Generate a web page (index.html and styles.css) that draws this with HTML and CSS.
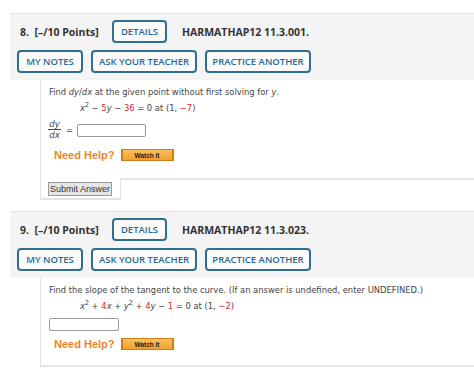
FILE: index.html
```html
<!DOCTYPE html>
<html lang="en">
<head>
  <meta charset="UTF-8">
  <title>Questions</title>
  <link rel="stylesheet" href="styles.css">
</head>
<body>

  <div class="question">
    <div class="q-head">
      <div class="q-row">
        <span class="q-num">8.&nbsp; [–/10 Points]</span>
        <button class="btn btn-details">DETAILS</button>
        <span class="q-code">HARMATHAP12 11.3.001.</span>
      </div>
      <div class="q-row">
        <button class="btn btn-notes">MY NOTES</button>
        <button class="btn btn-ask">ASK YOUR TEACHER</button>
        <button class="btn btn-practice">PRACTICE ANOTHER</button>
      </div>
    </div>
    <div class="q-body">
      <p class="prompt">Find <i>dy</i>/<i>dx</i> at the given point without first solving for <i>y</i>.</p>
      <p class="eq"><i>x</i><sup>2</sup> − <span class="red">5</span><i>y</i> − <span class="red">36</span> = 0 at (1, <span class="red">−7</span>)</p>
      <div class="answer-row">
        <span class="frac"><span class="top"><i>dy</i></span><span class="bot"><i>dx</i></span></span>
        <span class="eqsign">=</span>
        <input type="text" class="answer">
      </div>
      <div class="help">
        <span class="help-label">Need Help?</span>
        <button class="watch">Watch It</button>
      </div>
    </div>
    <div class="q-foot">
      <div class="submit-tab"><button class="submit">Submit Answer</button></div>
      <div class="foot-fill"></div>
    </div>
  </div>

  <div class="question">
    <div class="q-head">
      <div class="q-row">
        <span class="q-num">9.&nbsp; [–/10 Points]</span>
        <button class="btn btn-details">DETAILS</button>
        <span class="q-code">HARMATHAP12 11.3.023.</span>
      </div>
      <div class="q-row">
        <button class="btn btn-notes">MY NOTES</button>
        <button class="btn btn-ask">ASK YOUR TEACHER</button>
        <button class="btn btn-practice">PRACTICE ANOTHER</button>
      </div>
    </div>
    <div class="q-body last">
      <p class="prompt">Find the slope of the tangent to the curve. (If an answer is undefined, enter UNDEFINED.)</p>
      <p class="eq"><i>x</i><sup>2</sup> + <span class="red">4</span><i>x</i> + <i>y</i><sup>2</sup> + <span class="red">4</span><i>y</i> − <span class="red">1</span> = 0 at (1, <span class="red">−2</span>)</p>
      <div class="answer-row plain">
        <input type="text" class="answer wide">
      </div>
      <div class="help tight">
        <span class="help-label">Need Help?</span>
        <button class="watch">Watch It</button>
      </div>
    </div>
  </div>

</body>
</html>
```

FILE: styles.css
```css
body {
  margin: 0;
  padding: 13px 0 0 10px;
  background: #ffffff;
  font-family: 'Open Sans', sans-serif;
  color: #333;
  overflow: hidden;
}

.question {
  margin-bottom: 11px;
}

.q-head {
  background: #f4f4f4;
  border-top: 1px solid #e6e6e6;
  padding: 6px 0 7px 7px;
}

.q-row {
  display: flex;
  align-items: center;
  height: 23px;
}

.q-row + .q-row {
  margin-top: 7px;
}

.q-num {
  font-size: 10.5px;
  font-weight: 700;
  color: #333;
  margin-left: 3px;
  width: 92px;
}

.q-code {
  font-size: 10.5px;
  font-weight: 700;
  color: #333;
  margin-left: 8px;
}

.btn {
  font-family: 'Open Sans', sans-serif;
  font-size: 9.5px;
  font-weight: 600;
  color: #2a6a92;
  background: #fafafa;
  border: 2px solid #2f6e8f;
  border-radius: 4px;
  height: 23px;
  padding: 0;
  margin-right: 7px;
}

.btn-details { width: 55px; }
.btn-notes { width: 66px; }
.btn-ask { width: 106px; margin-left: 1px; }
.btn-practice { width: 106px; margin-left: 1px; }

.q-body {
  margin-left: 30px;
  background: #fff;
  border-left: 1px solid #e2e2e2;
  padding: 5px 0 10px 8px;
  font-family: 'DejaVu Sans Condensed', 'DejaVu Sans', Verdana, sans-serif;
  font-size: 9.3px;
  color: #444;
  height: 83px;
}

.q-body.last {
  height: 72px;
  border-bottom: 2px solid #e4e4e4;
}

.prompt {
  margin: 0;
  line-height: 14px;
}

.eq {
  margin: 2px 0 0 31px;
  line-height: 14px;
}

.eq sup {
  font-size: 7px;
  line-height: 0;
}

.red {
  color: #c9302c;
}

.answer-row {
  display: flex;
  align-items: center;
  margin-top: 3px;
  height: 22px;
}

.answer-row.plain {
  margin-top: 3px;
  height: 16px;
}

.frac {
  display: inline-flex;
  flex-direction: column;
  align-items: center;
  font-size: 9.5px;
  line-height: 10px;
  width: 11px;
}

.frac .top {
  border-bottom: 1px solid #444;
  padding: 0 1px;
}

.eqsign {
  margin: 0 4px 0 6px;
}

.answer {
  width: 67px;
  height: 11px;
  border: 1px solid #999;
  border-radius: 2px;
  padding: 0;
  margin: 3px 0 0 0;
}

.answer.wide {
  width: 68px;
  margin: 0;
}

.help {
  display: flex;
  align-items: center;
  margin: 9px 0 0 5px;
}

.help.tight {
  margin-top: 6px;
}

.help-label {
  font-family: 'Liberation Sans', Arial, sans-serif;
  font-weight: 700;
  font-size: 11px;
  color: #e8852a;
}

.watch {
  margin-left: 6px;
  width: 53px;
  height: 12px;
  padding: 0;
  font-family: 'Liberation Sans', Arial, sans-serif;
  font-size: 6.5px;
  font-weight: 700;
  color: #222;
  background: linear-gradient(#f9c15e, #f0a030);
  border: 1px solid #d27d14;
  border-left-width: 2px;
  border-right-width: 2px;
}

.q-foot {
  display: flex;
  margin-left: 30px;
}

.submit-tab {
  width: 81px;
  height: 22px;
  border-left: 1px solid #e2e2e2;
  border-right: 1px solid #e2e2e2;
  border-bottom: 2px solid #e4e4e4;
  padding: 4px 0 0 7px;
  box-sizing: border-box;
}

.submit {
  display: block;
  font-family: 'Liberation Sans', Arial, sans-serif;
  font-size: 9px;
  line-height: 12px;
  color: #333;
  background: #e6e6e6;
  border: 1px solid #999;
  padding: 0;
  height: 14px;
  width: 64px;
  border-radius: 0;
  white-space: nowrap;
}

.foot-fill {
  flex: 1;
  border-top: 2px solid #e4e4e4;
}
```
